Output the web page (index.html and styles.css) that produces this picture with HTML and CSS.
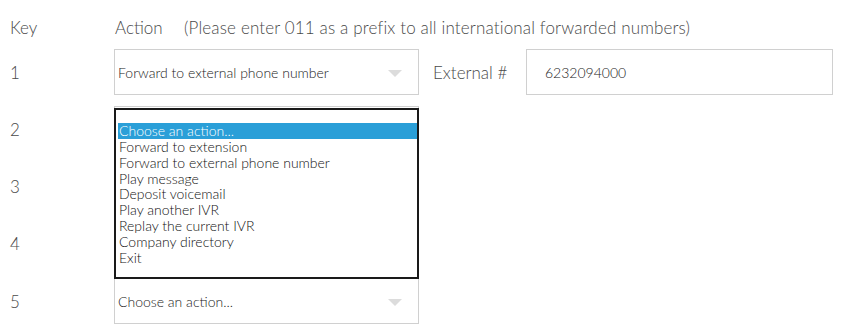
FILE: index.html
```html
<!DOCTYPE html>
<html lang="en">
<head>
<meta charset="UTF-8">
<title>IVR Key Actions</title>
<link rel="stylesheet" href="styles.css">
</head>
<body>
<div class="ivr-form">
    <div class="head-row">
        <span class="key-col">Key</span>
        <span class="action-head">Action</span>
        <span class="note">(Please enter 011 as a prefix to all international forwarded numbers)</span>
    </div>

    <div class="key-row">
        <span class="key-col">1</span>
        <div class="fake-select">Forward to external phone number<span class="arrow"></span></div>
        <span class="ext-label">External #</span>
        <div class="ext-input">6232094000</div>
    </div>

    <div class="key-row">
        <span class="key-col">2</span>
        <div class="fake-select"><span class="arrow"></span></div>
        <!-- open dropdown list -->
        <ul class="option-list">
            <li class="selected">Choose an action...</li>
            <li>Forward to extension</li>
            <li>Forward to external phone number</li>
            <li>Play message</li>
            <li>Deposit voicemail</li>
            <li>Play another IVR</li>
            <li>Replay the current IVR</li>
            <li>Company directory</li>
            <li>Exit</li>
        </ul>
    </div>

    <div class="key-row">
        <span class="key-col">3</span>
        <div class="fake-select"><span class="arrow"></span></div>
    </div>

    <div class="key-row">
        <span class="key-col">4</span>
        <div class="fake-select"><span class="arrow"></span></div>
    </div>

    <div class="key-row">
        <span class="key-col">5</span>
        <div class="fake-select">Choose an action...<span class="arrow"></span></div>
    </div>
</div>
</body>
</html>
```

FILE: styles.css
```css
body {
    font-family: Lato, "Open Sans", sans-serif;
    background-color: #fff;
    color: #555;
    margin: 0;
    padding: 0;
}
.ivr-form {
    padding: 14px 0 0 10px;
}
.head-row {
    display: flex;
    align-items: center;
    height: 26px;
    font-size: 17px;
    font-weight: 300;
    color: #4a4a4a;
    margin-bottom: 9px;
}
.key-col {
    width: 104px;
    flex-shrink: 0;
    font-size: 17px;
    font-weight: 300;
    color: #4a4a4a;
}
.action-head {
    margin-left: 1px;
    width: 69px;
}
.note {
    letter-spacing: 0.15px;
}
.key-row {
    display: flex;
    align-items: center;
    height: 46px;
    margin-bottom: 11.25px;
    position: relative;
}
.fake-select {
    box-sizing: border-box;
    width: 305px;
    height: 46px;
    border: 1px solid #d0d0d0;
    padding: 0 0 0 3px;
    display: flex;
    align-items: center;
    font-size: 14px;
    font-weight: 300;
    color: #222;
    position: relative;
}
.fake-select .arrow {
    position: absolute;
    right: 16px;
    top: 20px;
    width: 0;
    height: 0;
    border-left: 7px solid transparent;
    border-right: 7px solid transparent;
    border-top: 7px solid #dcdcdc;
}
.ext-label {
    margin-left: 14px;
    width: 93px;
    font-size: 17px;
    font-weight: 300;
    color: #4a4a4a;
}
.ext-input {
    box-sizing: border-box;
    width: 307px;
    height: 46px;
    border: 1px solid #d0d0d0;
    padding-left: 18px;
    display: flex;
    align-items: center;
    font-size: 14px;
    font-weight: 300;
    color: #222;
}
.option-list {
    position: absolute;
    left: 104px;
    top: 2px;
    box-sizing: border-box;
    width: 305px;
    height: 171px;
    margin: 0;
    padding: 13px 0 0 2px;
    list-style: none;
    background-color: #fff;
    border: 2px solid #1a1a1a;
    z-index: 2;
}
.option-list li {
    font-size: 14px;
    font-weight: 300;
    line-height: 15.8px;
    padding-left: 1px;
    color: #111;
}
.option-list li.selected {
    background-color: #2a9fd8;
    color: #fff;
}
```
